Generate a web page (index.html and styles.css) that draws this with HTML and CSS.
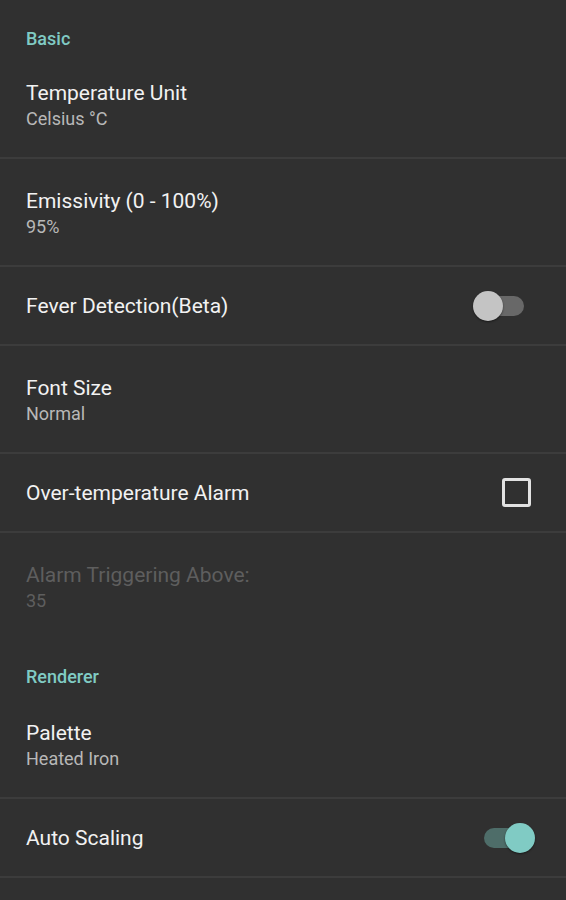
FILE: index.html
```html
<!DOCTYPE html>
<html>
<head>
<meta charset="utf-8">
<link rel="stylesheet" href="styles.css">
</head>
<body>
<div class="screen">
  <div class="category">Basic</div>
  <div class="pref two">
    <div class="title">Temperature Unit</div>
    <div class="summary">Celsius °C</div>
  </div>
  <div class="divider"></div>
  <div class="pref two">
    <div class="title">Emissivity (0 - 100%)</div>
    <div class="summary">95%</div>
  </div>
  <div class="divider"></div>
  <div class="pref one">
    <div class="title">Fever Detection(Beta)</div>
    <div class="switch"><div class="track"></div><div class="thumb"></div></div>
  </div>
  <div class="divider"></div>
  <div class="pref two">
    <div class="title">Font Size</div>
    <div class="summary">Normal</div>
  </div>
  <div class="divider"></div>
  <div class="pref one">
    <div class="title">Over-temperature Alarm</div>
    <div class="checkbox"></div>
  </div>
  <div class="divider"></div>
  <div class="pref two disabled">
    <div class="title">Alarm Triggering Above:</div>
    <div class="summary">35</div>
  </div>
  <div class="category">Renderer</div>
  <div class="pref two">
    <div class="title">Palette</div>
    <div class="summary">Heated Iron</div>
  </div>
  <div class="divider"></div>
  <div class="pref one">
    <div class="title">Auto Scaling</div>
    <div class="switch on"><div class="track"></div><div class="thumb"></div></div>
  </div>
  <div class="divider"></div>
</div>
</body>
</html>
```
FILE: styles.css
```css
html, body {
  margin: 0;
  padding: 0;
  background: #303030;
}
body {
  font-family: Roboto, "Noto Sans", sans-serif;
  width: 566px;
  height: 900px;
  overflow: hidden;
}
.screen {
  display: flex;
  flex-direction: column;
}
.category {
  height: 52px;
  box-sizing: border-box;
  padding: 28px 0 4px 26px;
  line-height: 20px;
  font-size: 18px;
  font-weight: 500;
  color: #80cbc4;
}
.category:first-child {
  height: 51px;
  padding-top: 29px;
  padding-bottom: 2px;
}
.pref {
  padding-left: 26px;
  padding-right: 30px;
  box-sizing: border-box;
}
.pref.two {
  height: 106px;
  padding-top: 30px;
}
.pref.one {
  height: 77px;
  display: flex;
  align-items: center;
  justify-content: space-between;
}
.title {
  font-size: 21px;
  line-height: 24px;
  color: #f2f2f2;
}
.summary {
  margin-top: 2px;
  font-size: 18px;
  line-height: 24px;
  color: #b8b8b8;
}
.disabled .title,
.disabled .summary {
  color: #5e5e5e;
}
.divider {
  height: 2px;
  background: #3c3c3c;
}
.switch {
  position: relative;
  width: 64px;
  height: 32px;
}
.track {
  position: absolute;
  left: 12px;
  top: 6px;
  width: 40px;
  height: 20px;
  border-radius: 10px;
  background: #686868;
}
.thumb {
  position: absolute;
  left: 1px;
  top: 1px;
  width: 30px;
  height: 30px;
  border-radius: 50%;
  background: #c4c4c4;
  box-shadow: 0 1px 2px rgba(0,0,0,0.5);
}
.switch.on .track {
  background: #4e6d69;
}
.switch.on .thumb {
  left: 33px;
  background: #80cbc4;
}
.checkbox {
  width: 23px;
  height: 23px;
  border: 3px solid #e2e2e2;
  border-radius: 3px;
  margin-right: 5px;
}
```
